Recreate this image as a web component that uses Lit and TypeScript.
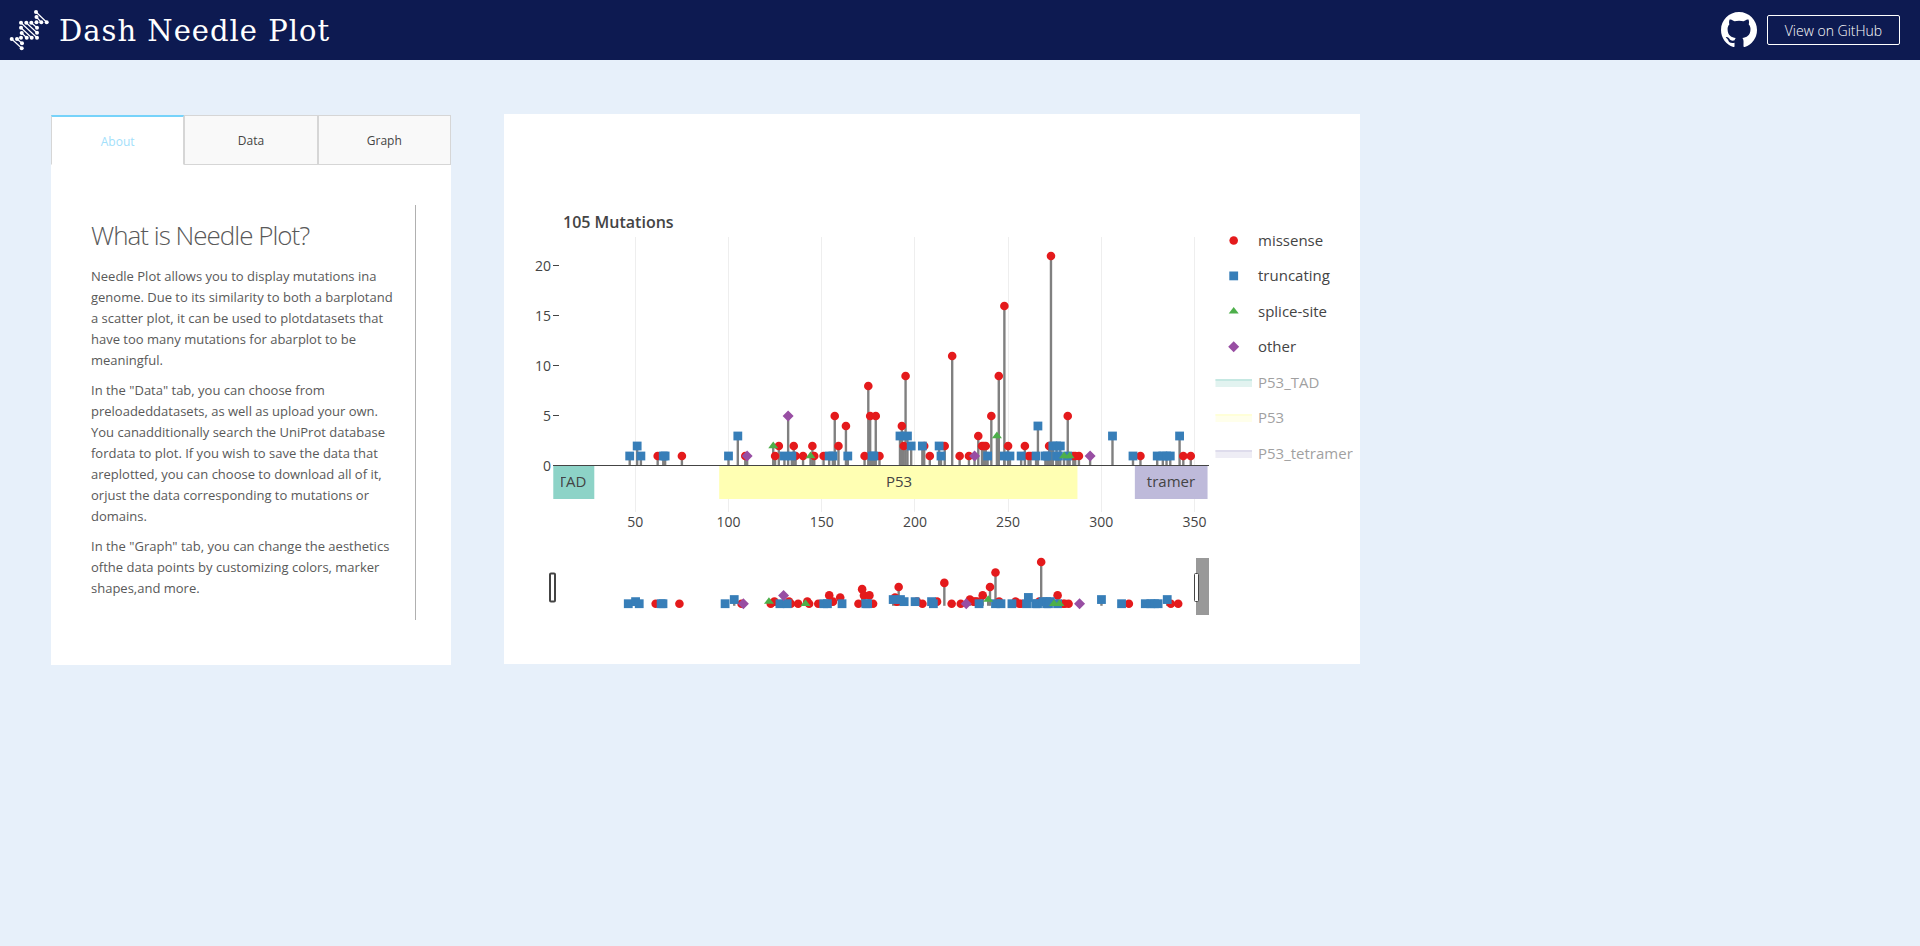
import { LitElement, html, svg, css } from "lit";
import { customElement, state } from "lit/decorators.js";

type Kind = "missense" | "truncating" | "splice" | "other";
type Point = [position: number, count: number];

const MUTATIONS: Record<Kind, Point[]> = {
  missense: [
    [62, 1], [75, 1], [109, 1], [125, 1], [127, 2], [135, 2], [136, 1], [140, 1], [145, 2], [146, 1],
    [151, 1], [157, 5], [159, 2], [163, 4], [173, 1], [175, 8], [176, 5], [179, 5], [181, 1], [193, 4],
    [194, 2], [195, 9], [205, 2], [208, 1], [216, 2], [220, 11], [224, 1], [229, 1], [234, 3], [236, 2],
    [237, 2], [238, 2], [241, 5], [245, 9], [248, 16], [250, 2], [259, 2], [261, 1], [262, 1], [272, 2],
    [273, 21], [282, 5], [285, 1], [286, 1], [288, 1], [321, 1], [344, 1], [348, 1],
  ],
  truncating: [
    [47, 1], [51, 2], [53, 1], [65, 1], [66, 1], [100, 1], [105, 3], [130, 1], [134, 1], [154, 1],
    [156, 1], [164, 1], [177, 1], [178, 1], [192, 3], [196, 3], [198, 2], [204, 2], [213, 2], [214, 1],
    [239, 1], [248, 1], [251, 1], [257, 1], [265, 1], [266, 4], [270, 1], [271, 1], [274, 2], [276, 2],
    [276, 1], [277, 1], [278, 2], [282, 1], [306, 3], [317, 1], [330, 1], [333, 1], [335, 1], [337, 1],
    [342, 3],
  ],
  splice: [[124, 2], [144, 1], [244, 3], [280, 1], [283, 1]],
  other: [[110, 1], [132, 5], [232, 1], [294, 1]],
};

const KINDS: Kind[] = ["missense", "truncating", "splice", "other"];
const COLORS: Record<Kind, string> = {
  missense: "#e41a1c",
  truncating: "#377eb8",
  splice: "#4daf4a",
  other: "#984ea3",
};

const DOMAINS = [
  { name: "P53_TAD", color: "#8dd3c7", start: 6, end: 28 },
  { name: "P53", color: "#ffffb3", start: 95, end: 287.2 },
  { name: "P53_tetramer", color: "#bebada", start: 318, end: 357 },
];

const mainX = (v: number) => 542.1 + v * 1.864;
const mainY = (v: number) => 465.5 + 0.5 - v * 10;
const miniX = (v: number) => 542.4 + v * 1.827;
const miniY = (v: number) => 605.8 - v * 2.083;

const marker = (kind: Kind, x: number, y: number) => {
  const fill = COLORS[kind];
  switch (kind) {
    case "missense":
      return svg`<circle cx=${x} cy=${y} r="4.3" fill=${fill} />`;
    case "truncating":
      return svg`<rect x=${x - 4.4} y=${y - 4.4} width="8.8" height="8.8" fill=${fill} />`;
    case "splice":
      return svg`<path d="M${x - 5} ${y + 2.2}h10l-5 -6.6z" fill=${fill} />`;
    default:
      return svg`<path d="M${x} ${y - 5.5}l5.5 5.5l-5.5 5.5l-5.5 -5.5z" fill=${fill} />`;
  }
};

@customElement("needle-plot")
class NeedlePlot extends LitElement {
  static styles = css`
    :host { display: block; }
    .plot { display: block; width: 100%; height: auto; font-family: "Open Sans", sans-serif; font-size: 15px; fill: #444; }
    .title { font-size: 16px; font-weight: 600; }
    .tick { font-size: 14px; }
    .grid { stroke: #eee; shape-rendering: crispEdges; }
    .axis { stroke: #444; shape-rendering: crispEdges; }
    .stem { stroke: #808080; stroke-width: 2.4; }
    .end { text-anchor: end; }
    .middle { text-anchor: middle; }
    .faded { opacity: 0.5; }
    .mask { fill: #999; }
    .handle { fill: #fff; stroke: #444; }
  `;

  private needles(x: (v: number) => number, y: (v: number) => number) {
    const base = y(0);
    return svg`
      ${KINDS.flatMap((k) => MUTATIONS[k].map(([p, c]) => svg`<path class="stem" d="M${x(p)} ${base}V${y(c)}" />`))}
      ${KINDS.flatMap((k) => MUTATIONS[k].map(([p, c]) => marker(k, x(p), y(c))))}
    `;
  }

  render() {
    const labels = ["missense", "truncating", "splice-site", "other"];
    return html`
      <svg class="plot" viewBox="504 114 856 550" role="img" aria-label="Needle plot of mutations">
        <defs>
          <clipPath id="tad"><rect x="561" y="466" width="34" height="33" /></clipPath>
        </defs>
        <text class="title" x="563" y="228">105 Mutations</text>
        ${[50, 100, 150, 200, 250, 300, 350].map((v) => svg`
          <path class="grid" d="M${mainX(v)} 237V512" />
          <text class="tick middle" x=${mainX(v)} y="527">${v}</text>`)}
        ${[0, 5, 10, 15, 20].map((v) => svg`
          <path class="axis" d="M553 ${mainY(v) - 0.5}h6" />
          <text class="tick end" x="551" y=${mainY(v) + 5}>${v}</text>`)}
        ${DOMAINS.map((d) => svg`
          <rect x=${mainX(d.start)} y="466" width=${mainX(d.end) - mainX(d.start)} height="33" fill=${d.color} />`)}
        <g clip-path="url(#tad)"><text class="middle" x="572" y="487">TAD</text></g>
        <text class="middle" x="899" y="487">P53</text>
        <text class="middle" x="1171" y="487">tramer</text>
        ${this.needles(mainX, mainY)}
        <path class="axis" d="M553 465.5H1209" />
        ${this.needles(miniX, miniY)}
        <rect class="mask" x="1196" y="558" width="13" height="57" />
        <rect class="handle" x="550" y="573.5" width="5" height="28" rx="1" stroke-width="2" />
        <rect class="handle" x="1194.5" y="573.5" width="4" height="28" rx="1" />
        ${KINDS.map((k, i) => svg`
          ${marker(k, 1233.7, 240.5 + i * 35.4)}
          <text x="1258" y=${246 + Math.round(i * 35.4)}>${labels[i]}</text>`)}
        ${DOMAINS.map((d, i) => svg`
          <g class="faded">
            <rect x="1215.5" y=${379 + Math.round(i * 35.4)} width="36.5" height="8" fill=${d.color} fill-opacity="0.5" />
            <rect x="1215.5" y=${379 + Math.round(i * 35.4)} width="36.5" height="2" fill=${d.color} />
            <text x="1258" y=${388 + Math.round(i * 35.4)}>${d.name}</text>
          </g>`)}
      </svg>
    `;
  }
}

@customElement("app-root")
class AppRoot extends LitElement {
  @state() private tab = "About";

  static styles = css`
    :host { display: block; min-height: 100vh; background: #e7f0fa; font-family: "Open Sans", sans-serif; color: #595959; }
    .bar { box-sizing: border-box; height: 60px; display: flex; align-items: center; justify-content: space-between; padding: 0 20px 0 8px; background: #0d1a51; }
    .brand { display: flex; align-items: center; gap: 9px; }
    .name { margin: 0; padding-top: 2px; font-family: "DejaVu Serif", serif; font-size: 29px; font-weight: 400; line-height: 40px; letter-spacing: 1px; color: #fff; }
    .links { display: flex; align-items: center; gap: 10px; }
    .github { box-sizing: border-box; width: 133px; height: 30px; border: 1px solid #fff; border-radius: 2px; color: #fff; font-size: 14px; font-weight: 300; line-height: 30px; text-align: center; text-decoration: none; }
    .octocat { display: block; fill: #fff; }
    main { display: flex; align-items: flex-start; gap: 53px; padding: 54px 51px; }
    .side { box-sizing: border-box; flex: 0 0 400px; min-height: 550px; margin-top: 1px; background: #fff; }
    .tabs { display: grid; grid-template-columns: repeat(3, 1fr); }
    .tab { height: 50px; padding: 2px 0 0; border: 1px solid #d6d6d6; background: #f9f9f9; font: 12px/18px "Open Sans", sans-serif; font-weight: 400; color: #444; }
    .tab[aria-selected="true"] { border-top: 2px solid #77d3fa; border-bottom-color: #fff; background: #fff; color: #a2e0fb; }
    .about { box-sizing: border-box; min-height: 415px; margin: 40px 35px 0 40px; padding: 11px 20px 0 0; border-right: 1px solid #b0b0b0; font-size: 13px; line-height: 21px; }
    h2 { margin: 0 0 12px; font-size: 26px; font-weight: 300; line-height: 38px; letter-spacing: -1px; }
    p { margin: 0 0 9px; }
    .card { flex: 0 1 856px; min-width: 0; background: #fff; }
  `;

  render() {
    return html`
      <header class="bar">
        <div class="brand">
          <svg width="42" height="42" viewBox="8 9 42 42" fill="#fff" stroke="#fff" stroke-width="1.2" aria-hidden="true">
            <path fill="none" d="M36 12L46.7 22.3M36.5 17L41.3 22.3M21 22.7L37 37.7M26.3 22.7L37 32.7M31.3 22.7L37 27.7M21 27.7L31.7 37.7M21.7 33L26.7 37.7M11.7 39L21.7 48.3M17 39L22 43.3" />
            ${[[36, 12], [46.7, 22.3], [41.3, 22.3], [36.5, 22.3], [36.5, 17], [21, 22.7], [26.3, 22.7], [31.3, 22.7], [21, 27.7], [21.7, 33], [21, 37.7], [37, 27.7], [37, 32.7], [37, 37.7], [31.7, 37.7], [26.7, 37.7], [11.7, 39], [17, 39], [22, 43.3], [21.7, 48.3]].map(
              ([x, y]) => svg`<circle cx=${x} cy=${y} r="2" stroke="none" />`,
            )}
          </svg>
          <h1 class="name">Dash Needle Plot</h1>
        </div>
        <div class="links">
          <svg class="octocat" width="36" height="36" viewBox="0 0 16 16" aria-hidden="true">
            <path d="M8 0C3.58 0 0 3.58 0 8c0 3.54 2.29 6.53 5.47 7.59.4.07.55-.17.55-.38 0-.19-.01-.82-.01-1.49-2.01.37-2.53-.49-2.69-.94-.09-.23-.48-.94-.82-1.13-.28-.15-.68-.52-.01-.53.63-.01 1.08.58 1.23.82.72 1.21 1.87.87 2.33.66.07-.52.28-.87.51-1.07-1.78-.2-3.64-.89-3.64-3.95 0-.87.31-1.59.82-2.15-.08-.2-.36-1.02.08-2.12 0 0 .67-.21 2.2.82.64-.18 1.32-.27 2-.27s1.36.09 2 .27c1.53-1.04 2.2-.82 2.2-.82.44 1.1.16 1.92.08 2.12.51.56.82 1.27.82 2.15 0 3.07-1.87 3.75-3.65 3.95.29.25.54.73.54 1.48 0 1.07-.01 1.93-.01 2.2 0 .21.15.46.55.38A8.01 8.01 0 0 0 16 8c0-4.42-3.58-8-8-8z" />
          </svg>
          <a class="github" href="#">View on GitHub</a>
        </div>
      </header>
      <main>
        <section class="side">
          <div class="tabs" role="tablist">
            ${["About", "Data", "Graph"].map((t) => html`
              <button class="tab" role="tab" aria-selected=${this.tab === t ? "true" : "false"} @click=${() => (this.tab = t)}>${t}</button>`)}
          </div>
          <div class="about" role="tabpanel">
            <h2>What is Needle Plot?</h2>
            <p>Needle Plot allows you to display mutations ina genome. Due to its similarity to both a barplotand a scatter plot, it can be used to plotdatasets that have too many mutations for abarplot to be meaningful.</p>
            <p>In the "Data" tab, you can choose from preloadeddatasets, as well as upload your own. You canadditionally search the UniProt database fordata to plot. If you wish to save the data that areplotted, you can choose to download all of it, orjust the data corresponding to mutations or domains.</p>
            <p>In the "Graph" tab, you can change the aesthetics ofthe data points by customizing colors, marker shapes,and more.</p>
          </div>
        </section>
        <section class="card"><needle-plot></needle-plot></section>
      </main>
    `;
  }
}
